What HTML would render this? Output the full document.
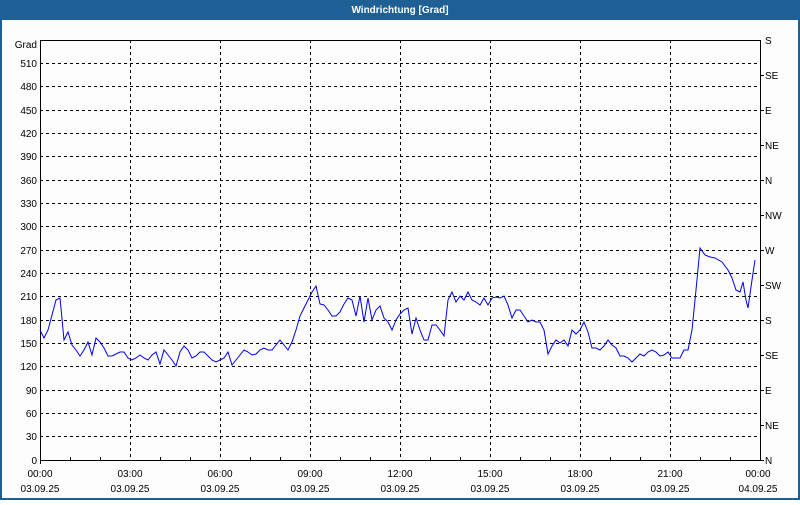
<!DOCTYPE html>
<html><head><meta charset="utf-8"><style>
body{margin:0;width:800px;height:500px;overflow:hidden;background:#fff;font-family:"Liberation Sans",sans-serif}
</style></head><body>
<svg width="800" height="500" xmlns="http://www.w3.org/2000/svg" font-family="Liberation Sans, sans-serif" font-size="10">
<rect x="0" y="0" width="800" height="500" fill="#1e5f96"/>
<rect x="2" y="20" width="796" height="478" fill="#fdfdfd"/>
<text x="400" y="13" fill="#fff" font-weight="bold" text-anchor="middle" font-size="10">Windrichtung [Grad]</text>
<g stroke="#000" stroke-dasharray="3,3" stroke-width="1">
<path d="M130.5 40V460M220.5 40V460M310.5 40V460M400.5 40V460M490.5 40V460M580.5 40V460M670.5 40V460"/>
<path d="M40 63.5H760M40 86.5H760M40 110.5H760M40 133.5H760M40 156.5H760M40 180.5H760M40 203.5H760M40 226.5H760M40 250.5H760M40 273.5H760M40 296.5H760M40 320.5H760M40 343.5H760M40 366.5H760M40 390.5H760M40 413.5H760M40 436.5H760"/>
</g>
<rect x="40.5" y="40.5" width="720" height="420" fill="none" stroke="#000"/>
<g stroke="#000"><path d="M760 75.5h4M760 110.5h4M760 145.5h4M760 180.5h4M760 215.5h4M760 250.5h4M760 285.5h4M760 320.5h4M760 355.5h4M760 390.5h4M760 425.5h4M760 460.5h4M40.5 460v4M70.5 460v-3M100.5 460v-3M160.5 460v-3M190.5 460v-3M250.5 460v-3M280.5 460v-3M340.5 460v-3M370.5 460v-3M430.5 460v-3M460.5 460v-3M520.5 460v-3M550.5 460v-3M610.5 460v-3M640.5 460v-3M700.5 460v-3M730.5 460v-3"/></g>
<g text-anchor="end" fill="#000">
<text x="37" y="48">Grad</text>
<text x="37" y="67">510</text><text x="37" y="90">480</text><text x="37" y="114">450</text><text x="37" y="137">420</text><text x="37" y="160">390</text><text x="37" y="184">360</text><text x="37" y="207">330</text><text x="37" y="230">300</text><text x="37" y="254">270</text><text x="37" y="277">240</text><text x="37" y="300">210</text><text x="37" y="324">180</text><text x="37" y="347">150</text><text x="37" y="370">120</text><text x="37" y="394">90</text><text x="37" y="417">60</text><text x="37" y="440">30</text><text x="37" y="464">0</text>
</g>
<g fill="#000">
<text x="765" y="44">S</text><text x="765" y="79">SE</text><text x="765" y="114">E</text><text x="765" y="149">NE</text><text x="765" y="184">N</text><text x="765" y="219">NW</text><text x="765" y="254">W</text><text x="765" y="289">SW</text><text x="765" y="324">S</text><text x="765" y="359">SE</text><text x="765" y="394">E</text><text x="765" y="429">NE</text><text x="765" y="464">N</text>
</g>
<g text-anchor="middle" fill="#000">
<text x="40" y="477">00:00</text><text x="40" y="492">03.09.25</text>
<text x="130" y="477">03:00</text><text x="130" y="492">03.09.25</text>
<text x="220" y="477">06:00</text><text x="220" y="492">03.09.25</text>
<text x="310" y="477">09:00</text><text x="310" y="492">03.09.25</text>
<text x="400" y="477">12:00</text><text x="400" y="492">03.09.25</text>
<text x="490" y="477">15:00</text><text x="490" y="492">03.09.25</text>
<text x="580" y="477">18:00</text><text x="580" y="492">03.09.25</text>
<text x="670" y="477">21:00</text><text x="670" y="492">03.09.25</text>
<text x="758" y="477">00:00</text><text x="758" y="492">04.09.25</text>
</g>
<polyline fill="none" stroke="#0000ee" stroke-width="1" points="40,330 44,338 48,330 52,315 56,300 60,298 64,340 68,332 72,345 76,350 80,356 84,350 88,342 92,355 96,338 100,342 104,348 108,356 112,356 116,354 120,352 124,352 128,358 132,360 136,358 140,355 144,358 148,360 152,355 156,352 160,364 164,350 168,355 172,360 176,366 180,352 184,346 188,350 192,358 196,356 200,352 204,352 208,356 212,360 216,362 220,360 224,358 228,352 232,365 236,360 240,355 244,350 248,352 252,355 256,354 260,350 264,348 268,350 272,350 276,345 280,340 284,345 288,350 292,342 296,330 300,316 304,308 308,300 312,292 316,286 320,304 324,305 328,310 332,316 336,316 340,312 344,304 348,298 352,300 356,316 360,296 364,322 368,298 372,320 376,310 380,306 384,318 388,322 392,330 396,320 400,314 404,310 408,308 412,334 416,318 420,330 424,340 428,340 432,325 436,325 440,330 444,336 448,300 452,292 456,302 460,296 464,300 468,292 472,300 476,302 480,305 484,298 488,305 492,298 496,297 500,298 504,296 508,305 512,318 516,310 520,310 524,316 528,322 532,320 536,322 540,322 544,330 548,354 552,346 556,340 560,343 564,340 568,346 572,330 576,334 580,330 584,322 588,332 592,348 596,348 600,350 604,346 608,340 612,345 616,348 620,356 624,356 628,358 632,362 636,358 640,354 644,356 648,352 652,350 656,352 660,356 664,355 668,352 672,358 676,358 680,358 684,350 688,350 692,330 696,290 700,248 705,255 710,257 715,258 722,262 728,270 732,278 736,290 740,292 743,282 746,300 748,308 752,280 755,260"/>
</svg>
</body></html>
